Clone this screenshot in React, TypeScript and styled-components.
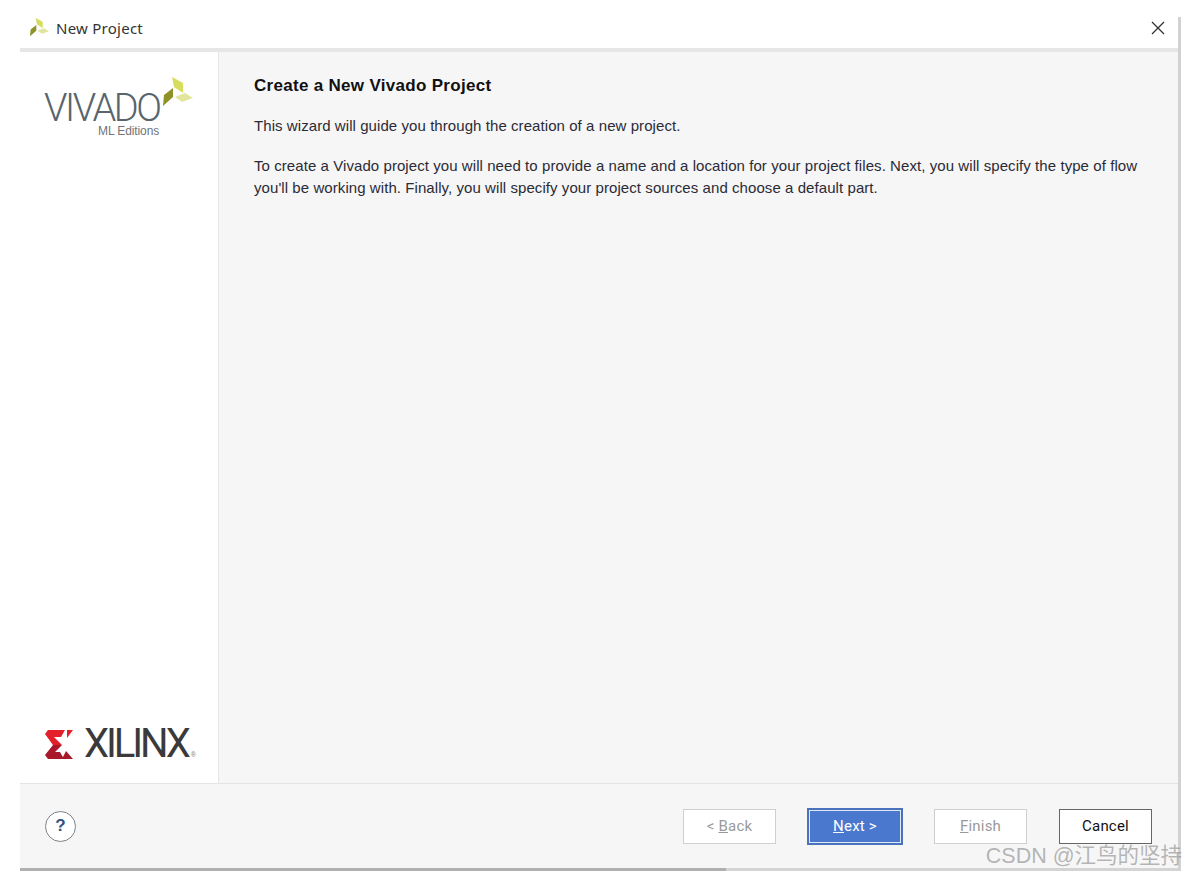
import React from "react";
import styled, { createGlobalStyle } from "styled-components";

const GlobalStyle = createGlobalStyle`
  html, body {
    margin: 0;
    padding: 0;
    background: #fff;
  }
  * {
    box-sizing: border-box;
  }
`;

const Leaf: React.FC<{ size: number }> = ({ size }) => (
  <svg width={size} height={size} viewBox="0 0 30 30">
    <polygon points="9,0 20,6 20,16 11,10" fill="#d8dc5c" />
    <polygon points="12,20 22,16 30,21 19,25" fill="#e2e59c" />
    <polygon points="0,29 1,18 10,11 10,20" fill="#8f9226" />
  </svg>
);

const XilinxMark = () => (
  <svg width="28" height="29" viewBox="0 0 28 29">
    <polygon points="3,0 20,0 16,7 9,7 17,15 8,15 0,4" fill="#e3202a" />
    <polygon points="8,15 17,15 10,22 15,22 19,29 3,29 0,25" fill="#a8182a" />
    <polygon points="22,0 28,0 22,8" fill="#e3202a" />
    <polygon points="21,21 28,29 17,29" fill="#a8182a" />
  </svg>
);

export default function App() {
  return (
    <Page>
      <GlobalStyle />
      <Dialog>
        <TitleBar>
          <TitleLeft>
            <Leaf size={19} />
            <TitleText>New Project</TitleText>
          </TitleLeft>
          <CloseButton aria-label="Close">
            <svg width="14" height="14" viewBox="0 0 14 14">
              <path d="M1 1 L13 13 M13 1 L1 13" stroke="#333" strokeWidth="1.3" fill="none" />
            </svg>
          </CloseButton>
        </TitleBar>
        <Body>
          <Sidebar>
            <VivadoLogo>
              <VivadoRow>
                <VivadoWord>VIVADO</VivadoWord>
                <LeafSpot>
                  <Leaf size={30} />
                </LeafSpot>
              </VivadoRow>
              <Editions>ML Editions</Editions>
            </VivadoLogo>
            <XilinxLogo>
              <XilinxMark />
              <XilinxWord>XILINX</XilinxWord>
              <Registered>®</Registered>
            </XilinxLogo>
          </Sidebar>
          <Main>
            <Heading>Create a New Vivado Project</Heading>
            <Paragraph>This wizard will guide you through the creation of a new project.</Paragraph>
            <Paragraph>
              To create a Vivado project you will need to provide a name and a location for your project files. Next,
              you will specify the type of flow you'll be working with. Finally, you will specify your project sources
              and choose a default part.
            </Paragraph>
          </Main>
        </Body>
        <Footer>
          <HelpButton aria-label="Help">?</HelpButton>
          <ButtonRow>
            <WizardButton disabled>
              &lt; <u>B</u>ack
            </WizardButton>
            <PrimaryButton>
              <u>N</u>ext &gt;
            </PrimaryButton>
            <WizardButton disabled>
              <u>F</u>inish
            </WizardButton>
            <CancelButton>Cancel</CancelButton>
          </ButtonRow>
        </Footer>
        <BottomEdge />
      </Dialog>
      <Watermark>CSDN @江鸟的坚持</Watermark>
    </Page>
  );
}

const Page = styled.div`
  position: relative;
  width: 1186px;
  height: 876px;
  padding: 6px 5px 5px 20px;
  overflow: hidden;
  background: #fff;
`;

const Dialog = styled.div`
  position: relative;
  display: flex;
  flex-direction: column;
  height: 100%;
  padding-right: 3px;

  &::after {
    content: "";
    position: absolute;
    top: 11px;
    right: 0;
    bottom: 0;
    width: 3px;
    background: #d2d2d2;
  }
`;

const TitleBar = styled.div`
  display: flex;
  align-items: center;
  justify-content: space-between;
  height: 46px;
  padding: 1px 13px 0 10px;
  border-bottom: 4px solid #e6e6e6;
  background: #fff;
`;

const TitleLeft = styled.div`
  display: flex;
  align-items: center;
  gap: 7px;
`;

const TitleText = styled.span`
  font-family: "Noto Sans", sans-serif;
  font-size: 15px;
  letter-spacing: 0.25px;
  color: #333;
`;

const CloseButton = styled.button`
  display: flex;
  border: 0;
  padding: 0;
  background: none;
`;

const Body = styled.div`
  display: flex;
  flex: 1;
  min-height: 0;
`;

const Sidebar = styled.aside`
  display: flex;
  flex-direction: column;
  justify-content: space-between;
  width: 199px;
  padding: 25px 0 19px 25px;
  border-right: 1px solid #e6e6e6;
  background: #fff;
`;

const VivadoLogo = styled.div`
  display: flex;
  flex-direction: column;
`;

const VivadoRow = styled.div`
  position: relative;
  height: 47px;
`;

const VivadoWord = styled.span`
  display: block;
  margin-left: -1px;
  padding-top: 16px;
  font-family: "Roboto", "Liberation Sans", sans-serif;
  font-size: 38px;
  font-weight: 300;
  line-height: 30px;
  letter-spacing: -2.4px;
  color: #59646c;
`;

const LeafSpot = styled.span`
  position: absolute;
  left: 118px;
  top: 0;
`;

const Editions = styled.span`
  margin-left: 53px;
  font-family: "Liberation Sans", sans-serif;
  font-size: 12px;
  letter-spacing: -0.1px;
  color: #6f7579;
`;

const XilinxLogo = styled.div`
  display: flex;
  align-items: center;
  gap: 11px;
`;

const XilinxWord = styled.span`
  font-family: "Roboto", "Liberation Sans", sans-serif;
  font-size: 40px;
  line-height: 40px;
  letter-spacing: -3.1px;
  color: #3a3a3a;
`;

const Registered = styled.span`
  align-self: flex-end;
  margin: 0 0 6px -8px;
  font-family: "Liberation Sans", sans-serif;
  font-size: 7px;
  color: #777;
`;

const Main = styled.main`
  flex: 1;
  padding: 24px 30px 0 35px;
  background: #f6f6f7;
`;

const Heading = styled.h1`
  margin: 0 0 19px;
  font-family: "Liberation Sans", sans-serif;
  font-size: 17px;
  line-height: 20px;
  font-weight: 700;
  letter-spacing: 0.3px;
  color: #111;
`;

const Paragraph = styled.p`
  margin: 0 0 18px;
  font-family: "Liberation Sans", sans-serif;
  font-size: 15px;
  line-height: 22px;
  letter-spacing: 0.07px;
  color: #2b2b35;
`;

const Footer = styled.footer`
  display: flex;
  align-items: center;
  justify-content: space-between;
  height: 85px;
  padding: 0 26px 0 25px;
  border-top: 1px solid #e4e4e4;
  background: #f6f6f7;
`;

const BottomEdge = styled.div`
  flex: none;
  height: 3px;
  background: linear-gradient(90deg, #b0b0b0 61%, #d4d4d4 61%);
`;

const HelpButton = styled.button`
  width: 31px;
  height: 31px;
  padding: 0;
  border: 1px solid #7a8388;
  border-radius: 50%;
  background: #fff;
  font-family: "Liberation Sans", sans-serif;
  font-size: 17px;
  font-weight: 700;
  color: #2c5282;
`;

const ButtonRow = styled.div`
  display: flex;
  align-items: center;
  gap: 31px;
`;

const WizardButton = styled.button`
  width: 93px;
  height: 35px;
  padding: 0;
  border: 1px solid #cfcfcf;
  background: #fff;
  font-family: "Roboto", "Liberation Sans", sans-serif;
  font-size: 15px;
  letter-spacing: 0.2px;
  color: #9a9a9a;
`;

const PrimaryButton = styled(WizardButton)`
  width: 96px;
  height: 37px;
  border: 2px solid #4a72bd;
  outline: 1px solid #dfe8f7;
  outline-offset: -3px;
  background: #4b78cf;
  color: #fff;
`;

const CancelButton = styled(WizardButton)`
  margin-left: 1px;
  border-color: #666;
  color: #111;
`;

const Watermark = styled.div`
  position: absolute;
  right: 4px;
  top: 844px;
  font-family: "Liberation Sans", "Noto Sans CJK SC", sans-serif;
  font-size: 21.5px;
  line-height: 24px;
  white-space: nowrap;
  color: rgba(150, 150, 150, 0.7);
`;
